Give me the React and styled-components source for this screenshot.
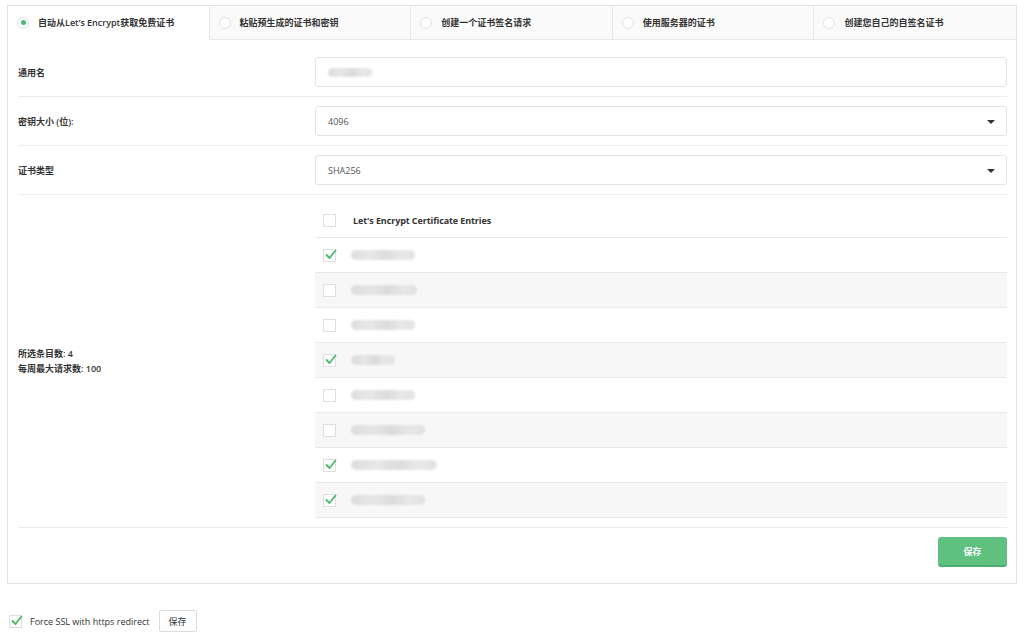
import React, { useState } from 'react'
import styled, { createGlobalStyle } from 'styled-components'

const Global = createGlobalStyle`
  body {
    margin: 0;
    background: #fff;
    font-family: "Open Sans", "Noto Sans CJK SC", sans-serif;
    font-size: 9px;
    color: #333;
  }
`

const Page = styled.div`
  padding: 5px 7px 0 7px;
  width: 1010px;
`

const Panel = styled.div`
  border: 1px solid #e3e3e3;
  background: #fff;
`

const Tabs = styled.div`
  display: grid;
  grid-template-columns: repeat(5, 1fr);
  height: 34px;
`

const Tab = styled.div`
  display: flex;
  align-items: center;
  gap: 9px;
  padding-left: 9px;
  background: ${(p) => (p.active ? '#fff' : '#fafafa')};
  border-right: 1px solid #e8e8e8;
  border-bottom: 1px solid ${(p) => (p.active ? 'transparent' : '#e8e8e8')};
  font-weight: 600;
  color: #333;
  cursor: pointer;
  &:last-child {
    border-right: none;
  }
`

const Radio = styled.span`
  width: 12px;
  height: 12px;
  box-sizing: border-box;
  border-radius: 50%;
  border: 1px solid #e2e2e2;
  background: #fff;
  display: flex;
  align-items: center;
  justify-content: center;
  &::after {
    content: '';
    width: 5px;
    height: 5px;
    border-radius: 50%;
    background: ${(p) => (p.active ? '#4fba6f' : 'transparent')};
  }
`

const Body = styled.div`
  padding: 8px 9px 0 10px;
`

const Row = styled.div`
  display: grid;
  grid-template-columns: 297px 1fr;
  align-items: center;
  padding: 9px 0;
  border-bottom: 1px solid #ededed;
`

const TableRow = styled(Row)`
  padding: 8px 0 9px;
`

const Label = styled.div`
  font-weight: 600;
  color: #333;
  line-height: 15px;
`

const Field = styled.div`
  position: relative;
  height: 30px;
  box-sizing: border-box;
  border: 1px solid #e3e3e3;
  border-radius: 3px;
  display: flex;
  align-items: center;
  padding-left: 12px;
  color: #555;
`

const Caret = styled.span`
  position: absolute;
  right: 11px;
  top: 13px;
  width: 0;
  height: 0;
  border-left: 4px solid transparent;
  border-right: 4px solid transparent;
  border-top: 4px solid #333;
`

const Blur = styled.span`
  display: inline-block;
  width: ${(p) => p.w}px;
  height: ${(p) => p.h || 10}px;
  border-radius: 5px;
  background: linear-gradient(90deg, #d8d8d8, #e4e4e4 30%, #d6d6d6 55%, #e6e6e6 80%, #dcdcdc);
  filter: blur(1.2px);
  opacity: 0.85;
`

const Table = styled.div`
  display: flex;
  flex-direction: column;
`

const EntryRow = styled.div`
  display: flex;
  align-items: center;
  gap: 15px;
  height: 35px;
  padding-left: 8px;
  box-sizing: border-box;
  background: ${(p) => (p.alt ? '#f7f7f7' : '#fff')};
  border-bottom: 1px solid #e8e8e8;
`

const HeaderText = styled.span`
  font-weight: 700;
  color: #333;
  margin-left: 2px;
  letter-spacing: -0.1px;
`

const Box = styled.span`
  position: relative;
  width: 13px;
  height: 13px;
  flex: none;
  box-sizing: border-box;
  border: 1px solid #dedede;
  background: #fff;
  svg {
    position: absolute;
    left: 1px;
    top: -1px;
  }
`

const Actions = styled.div`
  display: flex;
  justify-content: flex-end;
  padding: 9px 0 16px;
`

const SaveButton = styled.button`
  width: 69px;
  height: 30px;
  border: none;
  border-bottom: 2px solid #4dae6d;
  border-radius: 3px;
  background: #60c080;
  color: #fff;
  font-family: inherit;
  font-size: 9px;
  font-weight: 700;
  cursor: pointer;
`

const Footer = styled.div`
  display: flex;
  align-items: center;
  margin-top: 26px;
  margin-left: 2px;
  gap: 8px;
`

const FooterLabel = styled.span`
  color: #333;
  margin-right: 1px;
`

const SmallButton = styled.button`
  height: 22px;
  padding: 0 9px;
  border: 1px solid #dcdcdc;
  border-radius: 2px;
  background: #fff;
  color: #333;
  font-family: inherit;
  font-size: 9px;
`

function Check({ checked }) {
  return (
    <Box>
      {checked && (
        <svg width="12" height="11" viewBox="0 0 12 11">
          <path d="M1.5 6 L4.5 9 L10.5 1.5" fill="none" stroke="#4cb96b" strokeWidth="1.8" strokeLinecap="round" strokeLinejoin="round" />
        </svg>
      )}
    </Box>
  )
}

const tabs = [
  '自动从Let\u2019s Encrypt获取免费证书',
  '粘贴预生成的证书和密钥',
  '创建一个证书签名请求',
  '使用服务器的证书',
  '创建您自己的自签名证书',
]

const entries = [
  { checked: true, w: 64 },
  { checked: false, w: 66 },
  { checked: false, w: 64 },
  { checked: true, w: 44 },
  { checked: false, w: 64 },
  { checked: false, w: 74 },
  { checked: true, w: 86 },
  { checked: true, w: 74 },
]

export default function App() {
  const [active, setActive] = useState(0)

  return (
    <Page>
      <Global />
      <Panel>
        <Tabs>
          {tabs.map((t, i) => (
            <Tab key={t} active={i === active} onClick={() => setActive(i)}>
              <Radio active={i === active} />
              {t}
            </Tab>
          ))}
        </Tabs>
        <Body>
          <Row>
            <Label>通用名</Label>
            <Field>
              <Blur w={44} h={9} />
            </Field>
          </Row>
          <Row>
            <Label>密钥大小 (位):</Label>
            <Field>
              4096
              <Caret />
            </Field>
          </Row>
          <Row>
            <Label>证书类型</Label>
            <Field>
              SHA256
              <Caret />
            </Field>
          </Row>
          <TableRow>
            <Label>
              所选条目数: 4
              <br />
              每周最大请求数: 100
            </Label>
            <Table>
              <EntryRow>
                <Check />
                <HeaderText>Let's Encrypt Certificate Entries</HeaderText>
              </EntryRow>
              {entries.map((e, i) => (
                <EntryRow key={i} alt={i % 2 === 1}>
                  <Check checked={e.checked} />
                  <Blur w={e.w} />
                </EntryRow>
              ))}
            </Table>
          </TableRow>
          <Actions>
            <SaveButton>保存</SaveButton>
          </Actions>
        </Body>
      </Panel>
      <Footer>
        <Check checked />
        <FooterLabel>Force SSL with https redirect</FooterLabel>
        <SmallButton>保存</SmallButton>
      </Footer>
    </Page>
  )
}
